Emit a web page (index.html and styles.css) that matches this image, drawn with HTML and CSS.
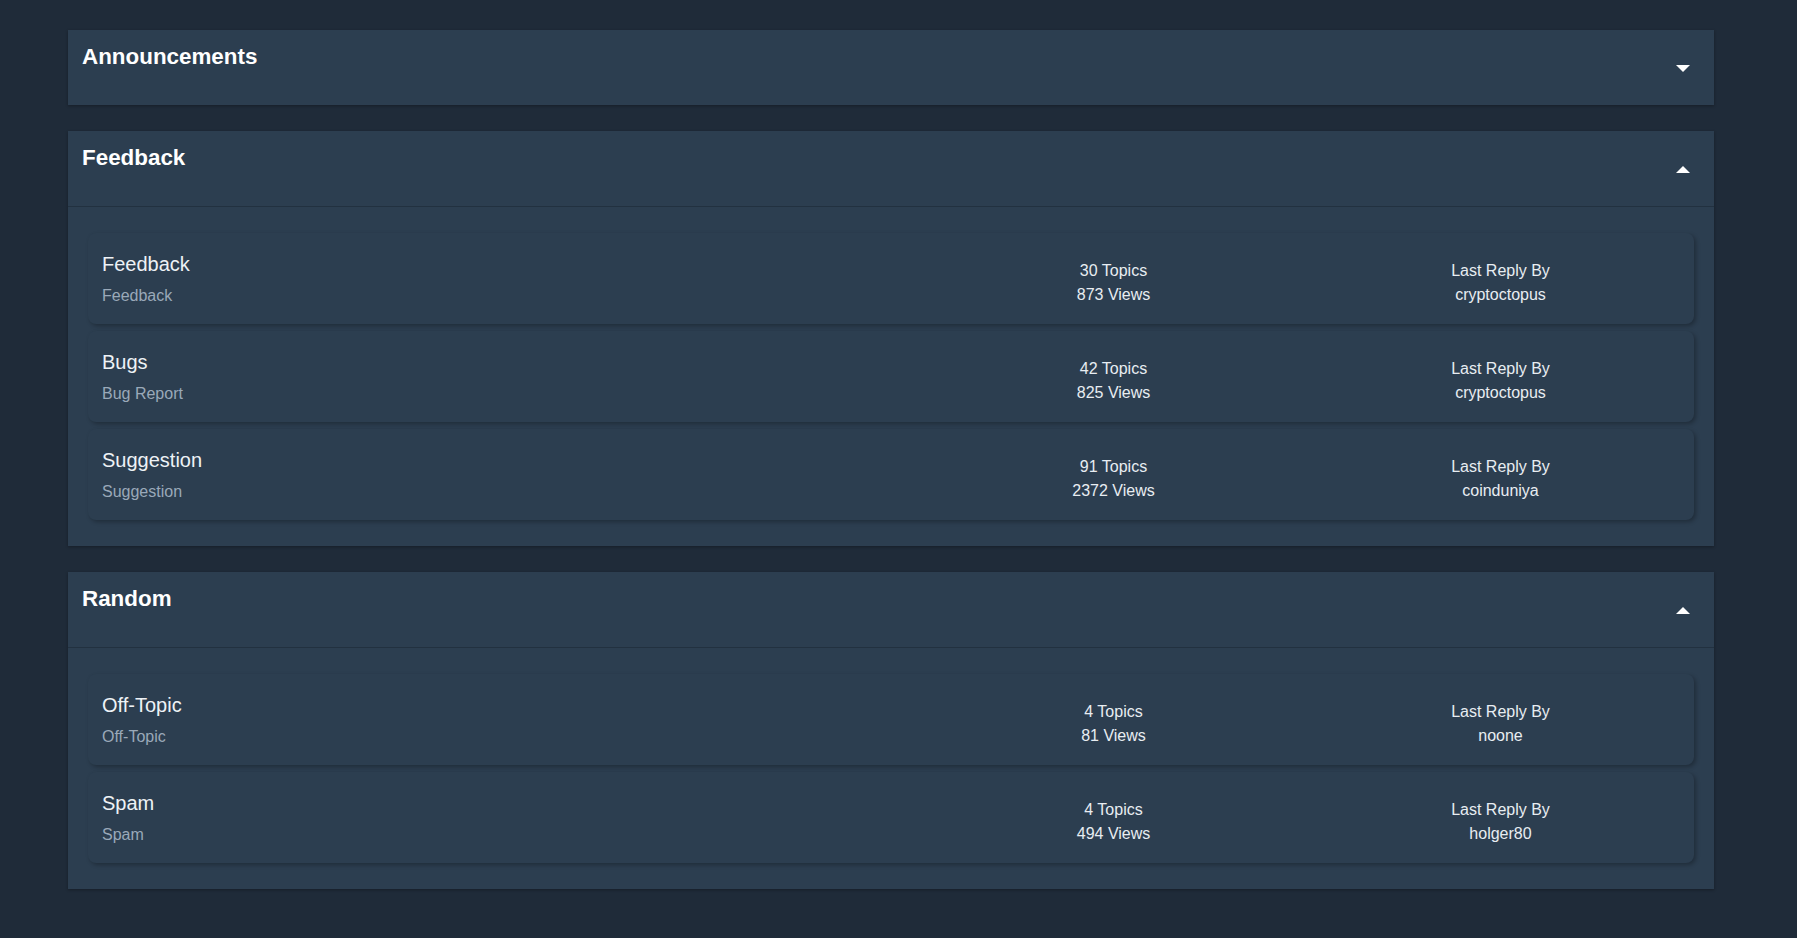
FILE: index.html
```html
<!DOCTYPE html>
<html lang="en">
<head>
<meta charset="utf-8">
<title>Forum</title>
<link rel="stylesheet" href="styles.css">
</head>
<body>
<main class="forum">
  <section class="panel">
    <header class="panel-header collapsed">
      <h2 class="panel-title">Announcements</h2>
      <svg class="caret" width="14" height="7" viewBox="0 0 14 7"><polygon points="0,0 14,0 7,7" fill="#fff"/></svg>
    </header>
  </section>

  <section class="panel">
    <header class="panel-header">
      <h2 class="panel-title">Feedback</h2>
      <svg class="caret" width="14" height="7" viewBox="0 0 14 7"><polygon points="0,7 14,7 7,0" fill="#fff"/></svg>
    </header>
    <div class="panel-body">
      <div class="board">
        <div class="board-info">
          <div class="board-name">Feedback</div>
          <div class="board-desc">Feedback</div>
        </div>
        <div class="stat"><div>30 Topics</div><div>873 Views</div></div>
        <div class="stat"><div>Last Reply By</div><div>cryptoctopus</div></div>
      </div>
      <div class="board">
        <div class="board-info">
          <div class="board-name">Bugs</div>
          <div class="board-desc">Bug Report</div>
        </div>
        <div class="stat"><div>42 Topics</div><div>825 Views</div></div>
        <div class="stat"><div>Last Reply By</div><div>cryptoctopus</div></div>
      </div>
      <div class="board">
        <div class="board-info">
          <div class="board-name">Suggestion</div>
          <div class="board-desc">Suggestion</div>
        </div>
        <div class="stat"><div>91 Topics</div><div>2372 Views</div></div>
        <div class="stat"><div>Last Reply By</div><div>coinduniya</div></div>
      </div>
    </div>
  </section>

  <section class="panel">
    <header class="panel-header">
      <h2 class="panel-title">Random</h2>
      <svg class="caret" width="14" height="7" viewBox="0 0 14 7"><polygon points="0,7 14,7 7,0" fill="#fff"/></svg>
    </header>
    <div class="panel-body">
      <div class="board">
        <div class="board-info">
          <div class="board-name">Off-Topic</div>
          <div class="board-desc">Off-Topic</div>
        </div>
        <div class="stat"><div>4 Topics</div><div>81 Views</div></div>
        <div class="stat"><div>Last Reply By</div><div>noone</div></div>
      </div>
      <div class="board">
        <div class="board-info">
          <div class="board-name">Spam</div>
          <div class="board-desc">Spam</div>
        </div>
        <div class="stat"><div>4 Topics</div><div>494 Views</div></div>
        <div class="stat"><div>Last Reply By</div><div>holger80</div></div>
      </div>
    </div>
  </section>
</main>
</body>
</html>
```

FILE: styles.css
```css
html, body {
  margin: 0;
  background: #1f2b39;
}
body {
  padding: 30px 0;
  font-family: "Liberation Sans", Arial, sans-serif;
}
.forum {
  margin-left: 68px;
  width: 1646px;
  display: flex;
  flex-direction: column;
  gap: 26px;
}
.panel {
  background: #2c3e50;
  box-shadow: 0 1px 3px rgba(0, 0, 0, 0.3);
}
.panel-header {
  height: 76px;
  box-sizing: border-box;
  padding: 14px 24px 0 14px;
  display: flex;
  justify-content: space-between;
  align-items: flex-start;
  border-bottom: 1px solid #223140;
}
.panel-header.collapsed {
  height: 75px;
  border-bottom: none;
}
.panel-title {
  margin: 0;
  font-size: 22.4px;
  line-height: 26px;
  font-weight: bold;
  color: #ffffff;
}
.caret {
  display: block;
  margin-top: 21px;
}
.panel-body {
  padding: 26px 20px 26px 20px;
  display: flex;
  flex-direction: column;
  gap: 7px;
}
.board {
  height: 91px;
  box-sizing: border-box;
  border-radius: 8px;
  background: #2c3e50;
  box-shadow: 2px 2px 4px rgba(0, 0, 0, 0.28);
  display: grid;
  grid-template-columns: 1fr 387px 387px;
  align-items: center;
  padding-left: 14px;
}
.board-name {
  font-size: 20px;
  line-height: 23px;
  color: #eef2f6;
}
.board-desc {
  margin-top: 11px;
  font-size: 16px;
  line-height: 18px;
  color: #9aa9b9;
}
.stat {
  padding-top: 9px;
  text-align: center;
  font-size: 16px;
  line-height: 24px;
  color: #e8edf2;
}
```
